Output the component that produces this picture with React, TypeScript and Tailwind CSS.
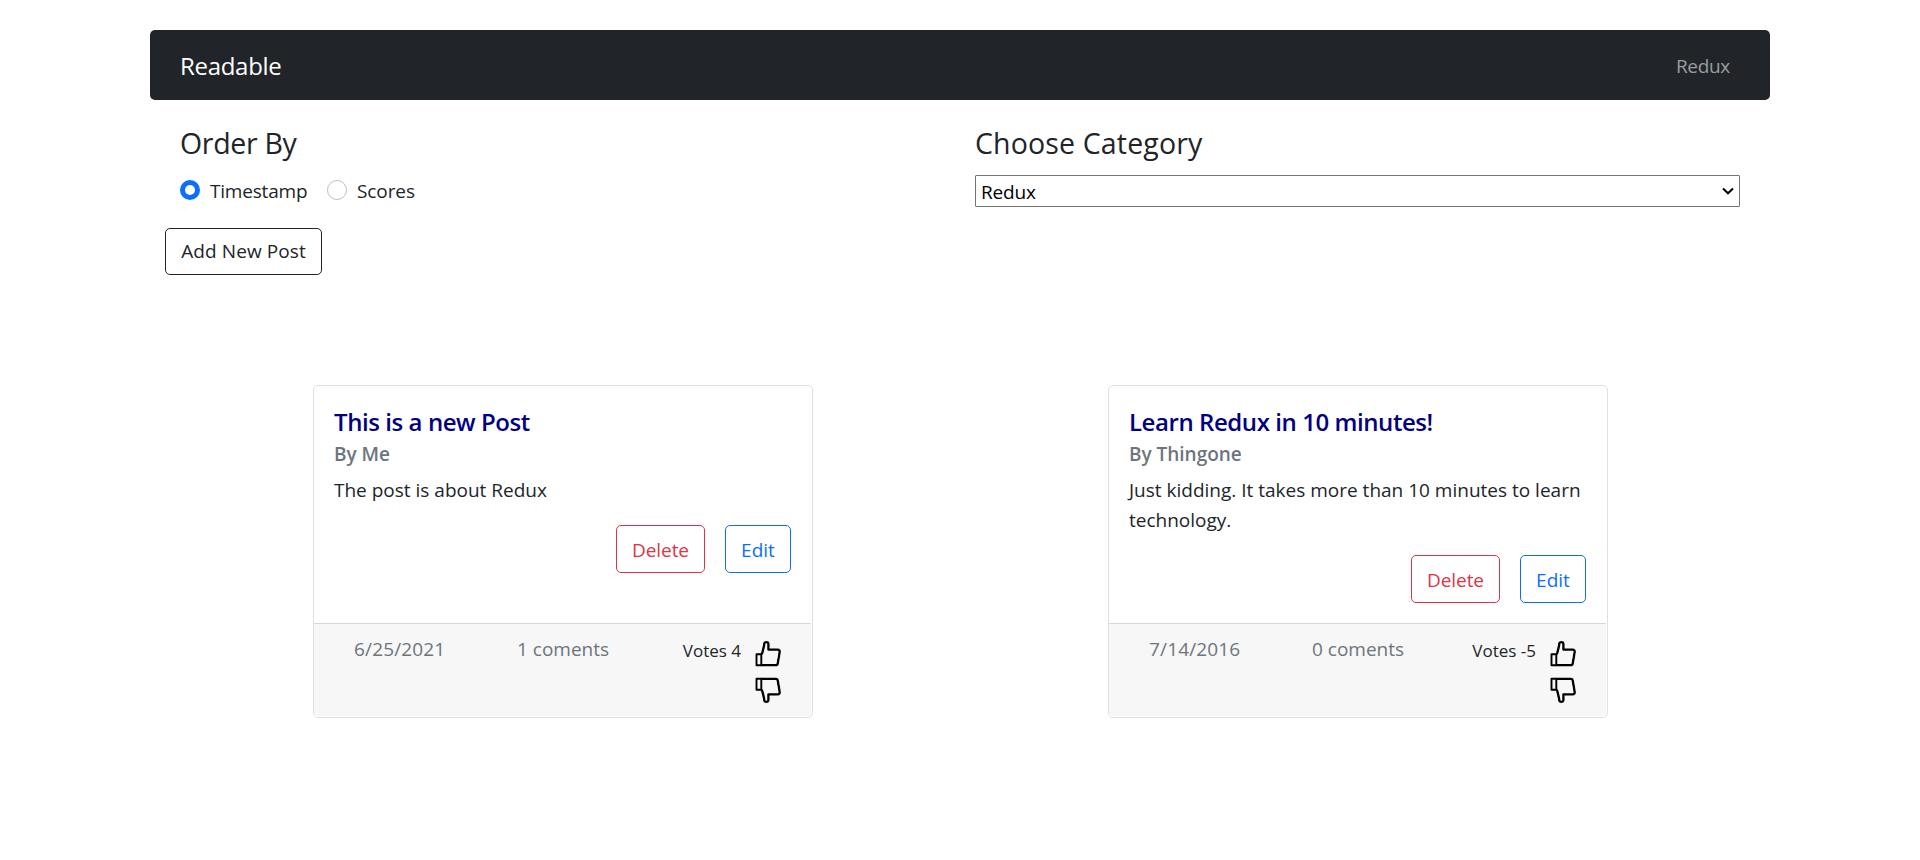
import React from "react";

type Post = {
  title: string;
  author: string;
  body: string;
  date: string;
  comments: string;
  votes: string;
};

const posts: Post[] = [
  {
    title: "This is a new Post",
    author: "Me",
    body: "The post is about Redux",
    date: "6/25/2021",
    comments: "1 coments",
    votes: "Votes 4",
  },
  {
    title: "Learn Redux in 10 minutes!",
    author: "Thingone",
    body: "Just kidding. It takes more than 10 minutes to learn technology.",
    date: "7/14/2016",
    comments: "0 coments",
    votes: "Votes -5",
  },
];

function Thumb({ down = false }: { down?: boolean }) {
  return (
    <svg
      viewBox="0 0 26 26"
      className={down ? "block size-[26px] -scale-y-100" : "block size-[26px]"}
      fill="none"
      stroke="#000"
      strokeWidth="2.3"
      strokeLinejoin="round"
    >
      <path d="M1.5 13.2H6.3V24.2H1.5Z" strokeWidth="1.9" />
      <path d="M6.3 13.2L7.2 12.2L9.1 4.6V3.2Q9.4 1.2 11.4 1.2T13.4 3.2V8.6H22.6Q24.9 8.8 24.7 11L24.2 13.4L23.9 16.2L23.3 18.6L22.9 21.8Q22.6 24.2 20.8 24.2H6.3" />
    </svg>
  );
}

function PostCard({ post }: { post: Post }) {
  return (
    <article className="flex h-[333px] w-[500px] flex-col rounded-[5px] border border-[#dfdfdf] bg-white pr-px pb-px">
      <div className="flex grow flex-col px-5 pt-[21px]">
        <h5 className="text-[24px] leading-[30px] font-semibold tracking-[-0.43px] text-[#000080]">
          {post.title}
        </h5>
        <h6 className="mt-[5px] leading-6 font-semibold tracking-[-0.02px] text-[#6c757d]">
          By {post.author}
        </h6>
        <p className="-mr-1 mt-[9px] leading-[30px]">{post.body}</p>
        <div className="mt-5 flex justify-end gap-5">
          <button className="h-12 w-[89px] rounded-[5px] border border-[#dc3545] pt-0.5 tracking-[-0.1px] text-[#dc3545]">
            Delete
          </button>
          <button className="h-12 w-[66px] rounded-[5px] border border-[#0d6efd] pt-0.5 text-[#0d6efd]">
            Edit
          </button>
        </div>
      </div>
      <footer className="flex h-[93px] items-start border-t border-[#d6d8d8] bg-[#f7f7f7] pt-2.5 pr-[30px] pl-10 leading-[30px] text-[#6c757d]">
        <span className="w-[163px] tracking-[0.15px]">{post.date}</span>
        <span>{post.comments}</span>
        <div className="ml-auto flex gap-[14px]">
          <span className="pt-0.5 text-[17px] text-[#212529]">{post.votes}</span>
          <div className="flex flex-col gap-[10px] pt-[7px]">
            <Thumb />
            <Thumb down />
          </div>
        </div>
      </footer>
    </article>
  );
}

export default function App() {
  return (
    <div className="mx-auto w-[1620px] pt-[30px] font-['Open_Sans',sans-serif] text-[19px] text-[#212529]">
      <nav className="flex h-[70px] items-center justify-between rounded-[5px] bg-[#212529] pt-0.5 pr-10 pl-[30px]">
        <span className="text-[24px] tracking-[-0.3px] text-white">Readable</span>
        <span className="tracking-[-0.3px] text-[#9b9d9e]">Redux</span>
      </nav>

      <div className="grid grid-cols-2 pt-[25px]">
        <section className="pl-[30px]">
          <h3 className="text-[28.5px] leading-9 tracking-[-0.3px]">Order By</h3>
          <div className="mt-[14px] flex h-[30px] items-center leading-[30px]">
            <span className="flex size-5 items-center justify-center rounded-full bg-[#0d6efd]">
              <span className="size-[10px] rounded-full bg-white" />
            </span>
            <label className="ml-2.5 w-[117px] pt-0.5 tracking-[-0.2px]">Timestamp</label>
            <span className="size-5 rounded-full border border-[#bfbfbf]" />
            <label className="ml-2.5 pt-0.5 tracking-[-0.1px]">Scores</label>
          </div>
        </section>
        <section className="pr-[30px] pl-[15px]">
          <h3 className="text-[28.5px] leading-9 tracking-[0.15px]">Choose Category</h3>
          <div className="mt-[14px] flex h-8 items-center justify-between rounded-[1px] border border-[#767676] px-[5px] tracking-[-0.15px] text-black">
            <span className="pt-0.5">Redux</span>
            <svg viewBox="0 0 12 8" className="h-2 w-3" fill="none" stroke="#000" strokeWidth="2">
              <path d="M1 1.5L6 6.3L11 1.5" />
            </svg>
          </div>
        </section>
      </div>

      <button className="mt-[21px] ml-[15px] block h-[47px] w-[157px] rounded-[5px] border border-[#212529] tracking-[0.1px]">
        Add New Post
      </button>

      <main className="grid grid-cols-[795px_500px] pt-[110px] pl-[163px]">
        {posts.map((post) => (
          <PostCard key={post.title} post={post} />
        ))}
      </main>
    </div>
  );
}
